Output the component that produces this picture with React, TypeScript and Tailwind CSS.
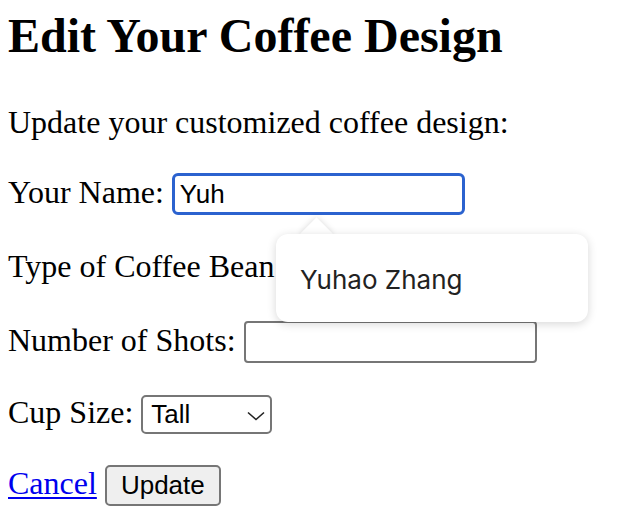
import React from "react";

const serif = "font-['Liberation_Serif',serif]";
const sans = "font-['Liberation_Sans',Arial,sans-serif]";

function TextField({ value, focused }: { value?: string; focused?: boolean }) {
  return (
    <input
      type="text"
      readOnly
      value={value ?? ""}
      className={`${sans} w-[293px] h-[42px] px-[5px] text-[26px] text-black bg-white outline-none ${
        focused
          ? "border-[3px] border-[#2b62cf] rounded-[6px]"
          : "border-2 border-[#767676] rounded-[4px]"
      }`}
    />
  );
}

export default function App() {
  return (
    <div className={`relative h-[524px] w-full bg-white text-black px-2 pt-2 ${serif}`}>
      <h1 className="text-[48px] font-bold leading-[55px] mb-[41px]">Edit Your Coffee Design</h1>

      <p className="text-[32px] leading-[37px] mb-[32px]">Update your customized coffee design:</p>

      <div className="flex items-baseline gap-2 text-[32px] leading-[37px] mb-[32px]">
        <span>Your Name:</span>
        <TextField value="Yuh" focused />
      </div>

      <div className="flex items-baseline gap-2 text-[32px] leading-[37px] mb-[32px]">
        <span>Type of Coffee Bean:</span>
        <TextField />
      </div>

      <div className="flex items-baseline gap-2 text-[32px] leading-[37px] mb-[31px]">
        <span>Number of Shots:</span>
        <TextField />
      </div>

      <div className="flex items-baseline gap-2 text-[32px] leading-[37px] mb-[31px]">
        <span>Cup Size:</span>
        <div className={`${sans} relative flex items-center w-[131px] h-[39px] border-2 border-[#767676] rounded-[5px] bg-white pl-[8px] text-[26px]`}>
          <span className="leading-[30px]">Tall</span>
          <svg className="absolute right-[5px] top-[14px]" width="18" height="10" viewBox="0 0 18 10">
            <path d="M1 1.5 L9 8.5 L17 1.5" fill="none" stroke="#222" strokeWidth="1.6" />
          </svg>
        </div>
      </div>

      <div className="flex items-baseline gap-2 text-[32px] leading-[37px]">
        <a href="#" className="text-[#0000ee] underline decoration-[2px] underline-offset-[3px]">
          Cancel
        </a>
        <button
          className={`${sans} w-[116px] h-[41px] bg-[#efefef] border-2 border-[#767676] rounded-[5px] text-[26px] text-black`}
        >
          Update
        </button>
      </div>

      {/* autofill popup */}
      <div className="absolute left-[305px] top-[222px] w-[23px] h-[23px] rotate-45 bg-white shadow-[0_0_6px_rgba(0,0,0,0.15)]" />
      <div className="absolute left-[276px] top-[234px] w-[312px] h-[88px] rounded-[12px] bg-white shadow-[0_2px_10px_rgba(0,0,0,0.16)] flex items-center pl-[24px]">
        <span className="font-['Inter',sans-serif] text-[26px] text-[#222] pt-[2px]">Yuhao Zhang</span>
      </div>
    </div>
  );
}
